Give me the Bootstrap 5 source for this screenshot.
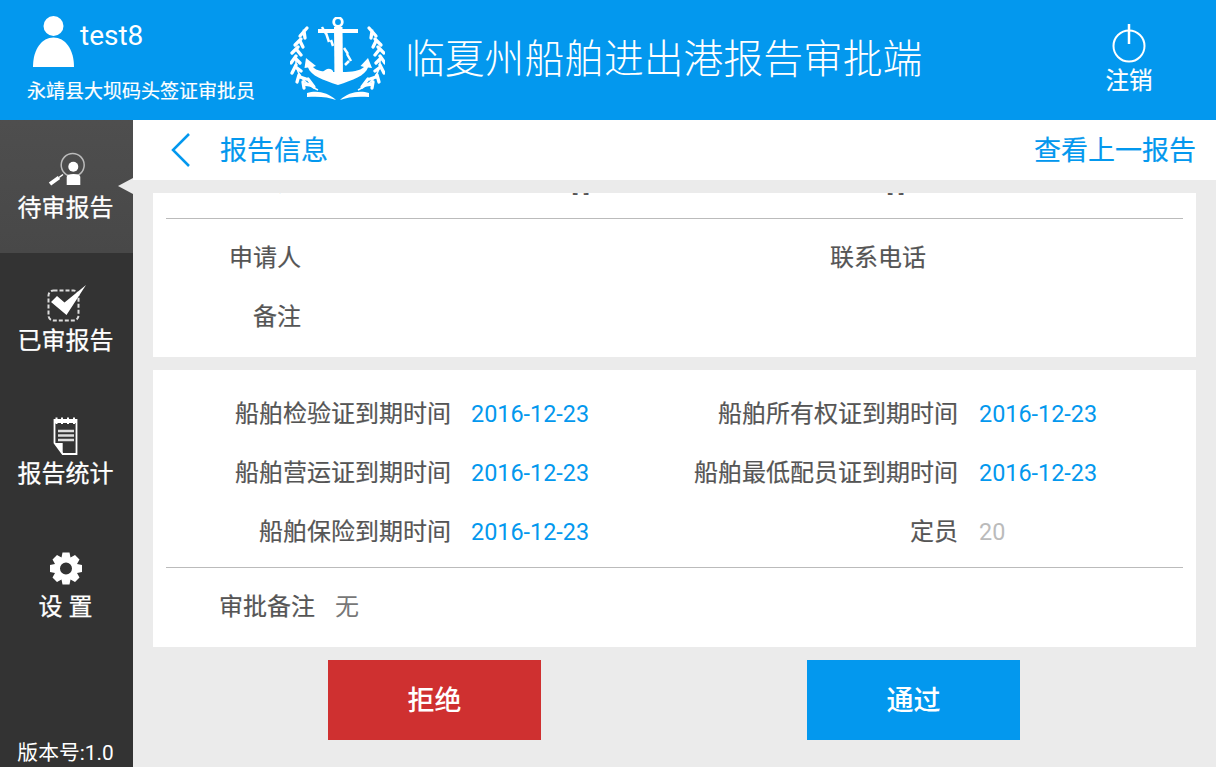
<!DOCTYPE html>
<html lang="zh-CN">
<head>
    <meta charset="UTF-8">
    <meta name="viewport" content="width=device-width, initial-scale=1.0">
    <title>临夏州船舶进出港报告审批端</title>
    <link href="https://cdn.jsdelivr.net/npm/bootstrap@5.3.0/dist/css/bootstrap.min.css" rel="stylesheet">
    <style>
        html, body { height: 100%; overflow: hidden; }
        body { font-family: Roboto, "Noto Sans CJK SC", sans-serif; background: #ebebeb; color: #555; }
        .app-top { height: 120px; background: #0398ee; color: #fff; }
        .user-box { width: 290px; }
        .user-icon { margin: 16px 0 0 33px; }
        .user-name { font-size: 28px; line-height: 32px; margin: 20px 0 0 6px; }
        .user-role { font-size: 19px; line-height: 28px; margin: 11px 0 0 27px; white-space: nowrap; -webkit-text-stroke: .2px #fff; }
        .logo-svg { margin-top: 17px; }
        .app-title { font-size: 39.8px; font-weight: 300; line-height: 120px; margin-left: 20px; white-space: nowrap; }
        .logout-box { width: 174px; padding-top: 22px; margin-left: auto; font-size: 23.5px; line-height: 28px; }
        .logout-text { margin-top: 1px; -webkit-text-stroke: .2px #fff; }
        .app-body { height: 647px; }
        .side-bar { width: 133px; background: #333; color: #fff; }
        .side-item { height: 133px; padding-top: 30px; position: relative; }
        .side-item.is-on { background: linear-gradient(#4e4e4e, #484848); }
        .side-item.is-on::after { content: ""; position: absolute; right: 0; top: 58px; border: 8px solid transparent; border-left: 0; border-right: 15px solid #ebebeb; }
        .side-ico { height: 38px; overflow: visible; }
        .side-text { font-size: 24px; line-height: 40px; white-space: nowrap; padding-right: 2px; -webkit-text-stroke: .25px #fff; }
        .side-ver { font-size: 20.8px; line-height: 28px; white-space: nowrap; padding-right: 2px; }
        .sub-bar { height: 60px; background: #fff; color: #0398ee; font-size: 27px; }
        .sub-text { padding-top: 2px; -webkit-text-stroke: .2px #0398ee; }
        .back-ico { margin: 0 29px 0 37px; }
        .scroll-zone { height: 454px; margin: 13px 20px 0; overflow: hidden; }
        .info-panel { background: #fff; }
        .info-panel + .info-panel { margin-top: 13px; }
        .panel-first { margin-top: -39px; padding-bottom: 10px; }
        .panel-second { padding-top: 14.5px; height: 277px; }
        .info-line { height: 59px; line-height: 59px; font-size: 24px; white-space: nowrap; -webkit-text-stroke: .2px #555; }
        .peek-line { margin-bottom: 5px; }
        .sep-line { height: 1px; background: #bbb; margin: 0 13px; }
        .after-sep { margin-top: 10px; }
        .lb-a { width: 148px; text-align: right; }
        .lb-b { width: 625px; text-align: right; }
        .lb-c { width: 298px; text-align: right; }
        .vl-c { width: 209px; padding-left: 20px; color: #0398ee; font-size: 23.4px; -webkit-text-stroke: 0; }
        .lb-d { width: 298px; text-align: right; }
        .vl-d { padding-left: 21px; color: #0398ee; font-size: 23.4px; -webkit-text-stroke: 0; }
        .vl-grey { color: #bbb; }
        .sep-second { margin-top: 5px; }
        .note-line { margin-top: 10px; }
        .note-label { width: 162px; text-align: right; }
        .note-text { padding-left: 20px; color: #777; -webkit-text-stroke: 0; }
        .peek-a { width: 289px; text-align: right; }
        .peek-b { width: 315px; text-align: right; }
        .act-bar { margin: 13px 20px 0; height: 80px; }
        .act-btn { width: 213px; height: 80px; line-height: 82px; color: #fff; font-size: 27px; font-weight: 500; text-align: center; }
        .act-no { background: #cf3030; margin-left: 175px; }
        .act-yes { background: #0398ee; margin-left: 266px; }
    </style>
</head>
<body>
    <header class="app-top d-flex">
        <div class="user-box">
            <div class="d-flex">
                <svg class="user-icon" width="41" height="51" viewBox="0 0 41 51">
                    <circle cx="20.5" cy="10" r="10" fill="#fff"/>
                    <path d="M0 51 C0 33 9 21.5 20.5 21.5 C32 21.5 41 33 41 51 Z" fill="#fff"/>
                </svg>
                <div class="user-name">test8</div>
            </div>
            <div class="user-role">永靖县大坝码头签证审批员</div>
        </div>
        <svg class="logo-svg" width="95" height="86" viewBox="290 17 95 86">
            <defs>
                <g id="wreathHalf">
                    <g fill="none" stroke="#fff" stroke-width="3.300" stroke-linecap="round">
                        <path d="M307 28 L300 36 M304 31 L305 38"/>
                        <path d="M301 39 L295 45 M300 41 L303 47"/>
                        <path d="M298 47 L292 53 M297 50 L301 55"/>
                        <path d="M296 56 L291 63 M296 59 L300 63"/>
                        <path d="M296 65 L292 73 M297 68 L301 71"/>
                        <path d="M299 75 L297 82 M300 77 L306 79"/>
                        <path d="M303 82 L304 88 M304 84 L311 85"/>
                        <path d="M308 79 L314 87"/>
                    </g>
                    <path d="M296 60 C295 72 304 84 318 90" fill="none" stroke="#fff" stroke-width="1.500"/>
                    <path d="M307 93 C316 90 328 92 336 100 C329 97 318 96 307 97 Z" fill="#fff"/>
                </g>
            </defs>
            <use href="#wreathHalf"/>
            <use href="#wreathHalf" transform="translate(676 0) scale(-1 1)"/>
            <g fill="none" stroke="#fff">
                <circle cx="338" cy="22" r="4.300" stroke-width="2.800"/>
                <path d="M322 27 L326 34 M326 33 L329 42 M331 40 L333 46" stroke-width="2.500"/>
                <path d="M344 48 L348 54 M347 54 L351 61 M349 61 L345 65" stroke-width="2.500"/>
            </g>
            <g fill="#fff">
                <rect x="318" y="29" width="40" height="4"/>
                <path d="M334 27 H342.500 L343 80 H334.500 Z"/>
                <path d="M306 58 L304.500 68 L308 67.500 C311 76 323 80 338 85 C353 80 365 76 368 67.500 L372 68 L368 58 L360.500 66 L364 67 C360 71 352 72 342 72 L334 72 C324 72 316 71 313 67 L316 66 Z"/>
                <path d="M322 73 C325 69 330 67 333 71 V74 Z"/>
            </g>
        </svg>
        <div class="app-title">临夏州船舶进出港报告审批端</div>
        <div class="logout-box text-center">
            <svg class="d-block mx-auto" width="34" height="44" viewBox="0 0 34 44">
                <circle cx="17" cy="24" r="15.500" fill="none" stroke="#fff" stroke-width="2"/>
                <path d="M17 2 V22" stroke="#fff" stroke-width="2.500"/>
            </svg>
            <div class="logout-text">注销</div>
        </div>
    </header>

    <div class="app-body d-flex">
        <nav class="side-bar d-flex flex-column text-center">
            <div class="side-item is-on">
                <svg class="side-ico d-block mx-auto" width="50" height="38" viewBox="0 0 50 38">
                    <circle cx="30.700" cy="15" r="11.500" fill="none" stroke="#bbb" stroke-width="1.500"/>
                    <circle cx="31.300" cy="16.700" r="5" fill="#fff"/>
                    <path d="M24.700 35 V27 C24.700 25 27 24 31.500 24 C36 24 38.300 25 38.300 27 V35 Z" fill="#fff"/>
                    <path d="M8 34 L17 27.500" stroke="#fff" stroke-width="4"/>
                    <path d="M17 27.500 L21 24.500" stroke="#fff" stroke-width="1.500"/>
                </svg>
                <div class="side-text">待审报告</div>
            </div>
            <div class="side-item">
                <svg class="side-ico d-block mx-auto" width="42" height="38" viewBox="0 0 42 38">
                    <rect x="2.500" y="7.500" width="30" height="30" rx="5" fill="none" stroke="#ddd" stroke-width="2" stroke-dasharray="4 2"/>
                    <path d="M5 19 L11 13 L18.500 19.500 L40 2 L20.500 32 Z" fill="#fff"/>
                </svg>
                <div class="side-text">已审报告</div>
            </div>
            <div class="side-item">
                <svg class="side-ico d-block mx-auto" width="30" height="38" viewBox="0 0 30 38">
                    <path d="M2.500 4 H24.500 V38 H10.700 L2.500 27 Z" fill="none" stroke="#fff" stroke-width="1.800"/>
                    <path d="M2.500 27 H10.700 V38 Z" fill="#fff"/>
                    <path d="M2.500 6 H24.500" stroke="#fff" stroke-width="2"/>
                    <path d="M4.500 1.500 V8 M10 1.500 V8 M16 1.500 V8 M22 1.500 V8" stroke="#fff" stroke-width="2"/>
                    <path d="M6 15 H22 M6 19.500 H22 M6 24 H22" stroke="#ddd" stroke-width="2.500"/>
                </svg>
                <div class="side-text">报告统计</div>
            </div>
            <div class="side-item">
                <svg class="side-ico d-block mx-auto" width="34" height="38" viewBox="0 0 34 38">
                    <g transform="translate(16 19.500)" fill="#fff">
                        <path d="M-3.500 -16 H3.500 L4.500 -11 L9 -13.500 L13.500 -9 L11 -4.500 L16 -3.500 V3.500 L11 4.500 L13.500 9 L9 13.500 L4.500 11 L3.500 16 H-3.500 L-4.500 11 L-9 13.500 L-13.500 9 L-11 4.500 L-16 3.500 V-3.500 L-11 -4.500 L-13.500 -9 L-9 -13.500 L-4.500 -11 Z M0 -6 A6 6 0 1 0 0 6 A6 6 0 1 0 0 -6 Z" fill-rule="evenodd"/>
                    </g>
                </svg>
                <div class="side-text">设 置</div>
            </div>
            <div class="side-ver mt-auto">版本号:1.0</div>
        </nav>

        <main class="flex-grow-1">
            <div class="sub-bar d-flex align-items-center">
                <svg class="back-ico" width="21" height="36" viewBox="0 0 21 36">
                    <path d="M19 2 L3 18 L19 34" fill="none" stroke="#0398ee" stroke-width="2.500"/>
                </svg>
                <span class="sub-text">报告信息</span>
                <span class="sub-text ms-auto me-3 pe-1">查看上一报告</span>
            </div>
            <div class="scroll-zone">
                <section class="info-panel panel-first">
                    <div class="info-line peek-line d-flex">
                        <div class="lb-a">到达港</div>
                        <div class="peek-a">[ ]</div>
                        <div class="peek-b">[ ]</div>
                    </div>
                    <div class="sep-line"></div>
                    <div class="info-line d-flex after-sep">
                        <div class="lb-a">申请人</div>
                        <div class="lb-b">联系电话</div>
                    </div>
                    <div class="info-line d-flex">
                        <div class="lb-a">备注</div>
                    </div>
                </section>
                <section class="info-panel panel-second">
                    <div class="info-line d-flex">
                        <div class="lb-c">船舶检验证到期时间</div>
                        <div class="vl-c">2016-12-23</div>
                        <div class="lb-d">船舶所有权证到期时间</div>
                        <div class="vl-d">2016-12-23</div>
                    </div>
                    <div class="info-line d-flex">
                        <div class="lb-c">船舶营运证到期时间</div>
                        <div class="vl-c">2016-12-23</div>
                        <div class="lb-d">船舶最低配员证到期时间</div>
                        <div class="vl-d">2016-12-23</div>
                    </div>
                    <div class="info-line d-flex">
                        <div class="lb-c">船舶保险到期时间</div>
                        <div class="vl-c">2016-12-23</div>
                        <div class="lb-d">定员</div>
                        <div class="vl-d vl-grey">20</div>
                    </div>
                    <div class="sep-line sep-second"></div>
                    <div class="info-line d-flex note-line">
                        <div class="note-label">审批备注</div>
                        <div class="note-text">无</div>
                    </div>
                </section>
            </div>
            <div class="act-bar d-flex">
                <div class="act-btn act-no">拒绝</div>
                <div class="act-btn act-yes">通过</div>
            </div>
        </main>
    </div>
    <script src="https://cdn.jsdelivr.net/npm/bootstrap@5.3.0/dist/js/bootstrap.bundle.min.js"></script>
</body>
</html>
